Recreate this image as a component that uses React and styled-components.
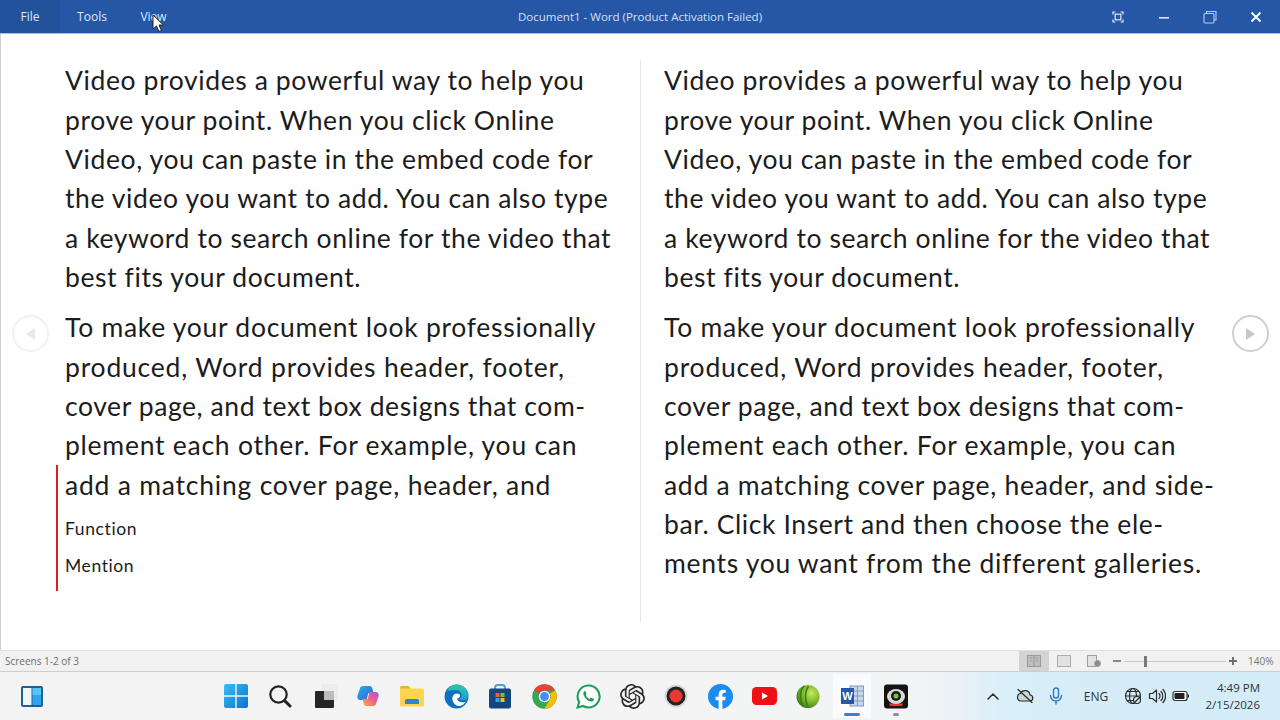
import React from "react";
import styled, { createGlobalStyle } from "styled-components";
import { SiOpenai } from "react-icons/si";

const Global = createGlobalStyle`
html, body { margin: 0; padding: 0; background: #fff; }
* { box-sizing: border-box; }
`;

const Screen = styled.div`
position: relative;
width: 1280px;
height: 720px;
overflow: hidden;
display: flex;
flex-direction: column;
font-family: "Open Sans", "Noto Sans", sans-serif;
`;

const TitleBar = styled.div`
height: 34px;
flex: none;
display: flex;
align-items: center;
background: #2557a6;
border-bottom: 1px solid #a9c0e6;
color: #dfe8f6;
font-size: 12px;
`;
const MenuItem = styled.div`
width: ${(p) => p.$w}px;
height: 33px;
display: flex;
align-items: center;
justify-content: center;
background: ${(p) => (p.$active ? "#23529d" : "transparent")};
`;
const DocTitle = styled.div`
position: absolute;
left: 0;
right: 0;
top: 9px;
text-align: center;
font-size: 11.5px;
color: #d5e0f2;
`;
const WindowButtons = styled.div`
margin-left: auto;
display: flex;
align-items: center;
padding-right: 1px;
`;
const WindowButton = styled.div`
width: 46px;
height: 33px;
display: flex;
align-items: center;
justify-content: center;
`;

const Reader = styled.div`
flex: 1;
position: relative;
display: flex;
padding-top: 26px;
border-left: 1px solid #cfcfcf;
`;
const Page = styled.div`
width: ${(p) => p.$w}px;
height: 562px;
padding: 1.4px 0 0 ${(p) => p.$pad}px;
border-right: ${(p) => (p.$divider ? "1px solid #e6e6e6" : "none")};
font-family: Lato, "Liberation Sans", sans-serif;
font-size: 26.5px;
line-height: 39.3px;
letter-spacing: 0.6px;
color: #1c1c1c;
`;
const Para = styled.div`
margin-bottom: 11.2px;
`;
const Line = styled.div`
white-space: nowrap;
letter-spacing: ${(p) => p.$ls || 0.6}px;
`;
const Suggest = styled.div`
margin: -1px 0 0 -9px;
padding: 1px 0 0 7px;
width: 300px;
height: 126px;
border-left: 2px solid #d6202a;
`;
const SuggestItem = styled.div`
font-size: 17.5px;
line-height: 37px;
${Line} + & { margin-top: 5px; }
`;
const NavButton = styled.div`
position: absolute;
top: 281px;
left: ${(p) => p.$x}px;
width: 37px;
height: 37px;
border-radius: 50%;
border: 2px solid ${(p) => (p.$off ? "#f1f1f1" : "#cfcfcf")};
background: #fff;
display: flex;
align-items: center;
justify-content: center;
`;

const StatusBar = styled.div`
height: 22px;
flex: none;
display: flex;
align-items: center;
background: #f1f1f1;
border-top: 1px solid #e2e2e2;
border-bottom: 1px solid #cdcdcd;
padding-left: 5px;
font-size: 10px;
color: #6d6d6d;
`;
const ViewButtons = styled.div`
margin-left: auto;
display: flex;
align-items: center;
height: 100%;
`;
const ViewButton = styled.div`
width: 30px;
height: 20px;
display: flex;
align-items: center;
justify-content: center;
background: ${(p) => (p.$on ? "#d3d3d3" : "transparent")};
`;
const Zoomer = styled.div`
display: flex;
align-items: center;
margin-left: 4px;
width: 124px;
color: #6a6a6a;
`;
const ZoomMark = styled.div`
width: 8px;
height: ${(p) => (p.$plus ? 8 : 2)}px;
position: relative;
flex: none;
background: ${(p) => (p.$plus ? "transparent" : "#8a8a8a")};
${(p) => p.$plus && `
  &::before { content: ""; position: absolute; left: 0; right: 0; top: 3px; height: 2px; background: #707070; }
  &::after { content: ""; position: absolute; top: 0; bottom: 0; left: 3px; width: 2px; background: #707070; }
`}
`;
const Track = styled.div`
flex: 1;
height: 1px;
margin: 0 3px;
background: #c9c9c9;
position: relative;
`;
const Thumb = styled.div`
position: absolute;
left: 20px;
top: -5px;
width: 3px;
height: 11px;
background: #7a7a7a;
`;
const Percent = styled.div`
width: 43px;
padding-left: 11px;
color: #777;
font-size: 10px;
`;

const Taskbar = styled.div`
height: 48px;
flex: none;
display: flex;
align-items: center;
padding-left: 10px;
background: linear-gradient(90deg, #f3f3f3 0%, #f3f4f5 72%, #d8eef8 79%, #d2ecf8 100%);
`;
const TaskSlot = styled.div`
position: relative;
width: 44px;
height: 44px;
padding: 0 3px;
display: flex;
align-items: center;
justify-content: center;
flex: none;
background: ${(p) => (p.$open ? "#fafbfc" : "transparent")};
background-clip: content-box;
`;
const Running = styled.div`
position: absolute;
bottom: 2px;
left: 50%;
transform: translateX(-50%);
width: ${(p) => (p.$active ? 16 : 6)}px;
height: 3px;
border-radius: 2px;
background: ${(p) => (p.$active ? "#3a7fd0" : "#8f8f8f")};
`;
const TaskIcons = styled.div`
display: flex;
margin-left: 160px;
`;
const Tray = styled.div`
margin-left: auto;
display: flex;
align-items: center;
height: 100%;
padding-right: 20px;
color: #333;
`;
const TrayItem = styled.div`
width: ${(p) => p.$w}px;
display: flex;
justify-content: center;
font-size: ${(p) => p.$size || 11}px;
`;
const Clock = styled.div`
width: 67px;
text-align: right;
font-size: 11.5px;
line-height: 17px;
color: #333;
`;
const Cursor = styled.svg`
position: absolute;
left: 152px;
top: 14px;
`;

const text1 = [
  "Video provides a powerful way to help you",
  "prove your point. When you click Online",
  "Video, you can paste in the embed code for",
  "the video you want to add. You can also type",
  "a keyword to search online for the video that",
  "best fits your document.",
];
// second paragraph runs a touch wider in the original than Lato does
const text2 = [
  { t: "To make your document look professionally", ls: 0.72 },
  { t: "produced, Word provides header, footer,", ls: 0.8 },
  { t: "cover page, and text box designs that com-", ls: 0.58 },
  { t: "plement each other. For example, you can", ls: 0.75 },
];
const lastLine = "add a matching cover page, header, and";

function Lines({ items }) {
  return items.map((l) => <Line key={l}>{l}</Line>);
}
function SpacedLines({ items }) {
  return items.map((l) => <Line key={l.t} $ls={l.ls}>{l.t}</Line>);
}

const IconWindows = () => (
  <svg width="24" height="24" viewBox="0 0 24 24">
    <defs>
      <linearGradient id="win" x1="0" y1="0" x2="1" y2="1">
        <stop offset="0" stopColor="#35c0f5" />
        <stop offset="1" stopColor="#0a73d0" />
      </linearGradient>
    </defs>
    <path fill="url(#win)" d="M0 2a2 2 0 0 1 2-2h9.3v11.3H0zM12.7 0H22a2 2 0 0 1 2 2v9.3H12.7zM0 12.7h11.3V24H2a2 2 0 0 1-2-2zM12.7 12.7H24V22a2 2 0 0 1-2 2h-9.3z" />
  </svg>
);
const IconSearch = () => (
  <svg width="24" height="24" viewBox="0 0 24 24" fill="none" stroke="#222" strokeWidth="2.2" strokeLinecap="round">
    <circle cx="10.5" cy="10.5" r="8.2" />
    <path d="M16.6 16.6 22 22" strokeWidth="3" />
  </svg>
);
const IconTaskView = () => (
  <svg width="30" height="30" viewBox="0 0 30 30">
    <rect x="12" y="3" width="17" height="17" rx="2" fill="#ececec" />
    <rect x="15" y="10" width="10" height="9" fill="#bdbdbd" />
    <path fill="#262626" d="M7 10h8v9h10v7a1 1 0 0 1-1 1H7a1 1 0 0 1-1-1V11a1 1 0 0 1 1-1z" />
  </svg>
);
const IconCopilot = () => (
  <svg width="24" height="24" viewBox="0 0 24 24">
    <defs>
      <linearGradient id="co1" x1="0" y1="0" x2="1" y2="1">
        <stop offset="0" stopColor="#1fb3e8" />
        <stop offset="1" stopColor="#3b5fd8" />
      </linearGradient>
      <linearGradient id="co2" x1="0" y1="1" x2="1" y2="0">
        <stop offset="0" stopColor="#f5b52e" />
        <stop offset="0.55" stopColor="#ef5f8f" />
        <stop offset="1" stopColor="#a155dd" />
      </linearGradient>
    </defs>
    <path fill="url(#co1)" d="M7 2h6.5c1.4 0 2.4.9 2.8 2.2L17.5 9h-5L10.300 16H4.500C2 16 .8 13.700 1.500 11.500L4 4.300C4.500 2.900 5.600 2 7 2z" />
    <path fill="url(#co2)" d="M17 22h-6.500c-1.400 0-2.400-.9-2.800-2.200L6.500 15h5l2.200-7h5.800c2.500 0 3.700 2.300 3 4.500L20 19.700C19.500 21.100 18.400 22 17 22z" />
  </svg>
);
const IconFolder = () => (
  <svg width="26" height="24" viewBox="0 0 26 24">
    <path fill="#e9b52c" d="M1 3.500A1.500 1.500 0 0 1 2.500 2h7l3 3H1z" />
    <rect x="1" y="4.500" width="24" height="18" rx="1.500" fill="#fbd54f" />
    <path fill="#2f87c9" d="M6 16.500A1.500 1.500 0 0 1 7.500 15h11a1.500 1.500 0 0 1 1.500 1.500V20H6z" />
  </svg>
);
const IconEdge = () => (
  <svg width="25" height="25" viewBox="0 0 24 24">
    <defs>
      <linearGradient id="ed1" x1="0" y1="0" x2="0" y2="1">
        <stop offset="0" stopColor="#33c6a0" />
        <stop offset="1" stopColor="#1a9fd8" />
      </linearGradient>
    </defs>
    <circle cx="12" cy="12" r="11.500" fill="#0f6fc0" />
    <path fill="url(#ed1)" d="M3 6.500C5 2.500 8.500.5 12 .5c6.500 0 11.500 5 11.500 10.500 0 3-2.500 4.500-5.500 4.500-2 0-3.500-.6-4-1 2-.8 3-2 3-3.500C17 8 14.500 6 11 6 7.500 6 4.500 6.500 3 6.500z" />
    <path fill="#fff" d="M8 14c0-3 2-5 4.500-5 2 0 3 1 3 2 0 1.500-1.500 2.500-3 3 .5 3 4 4.500 8.500 3-2 3-5 4.500-7.500 4C10.500 20.500 8 17.500 8 14z" />
  </svg>
);
const IconStore = () => (
  <svg width="24" height="25" viewBox="0 0 24 25">
    <path d="M7 5V3.500A2.500 2.500 0 0 1 9.500 1h5A2.500 2.500 0 0 1 17 3.500V5" fill="none" stroke="#4fa3da" strokeWidth="2" />
    <rect x="1" y="4.500" width="22" height="20" rx="2" fill="#16467e" />
    <rect x="7.500" y="9" width="4" height="4" fill="#f15a3c" />
    <rect x="12.500" y="9" width="4" height="4" fill="#7fbb32" />
    <rect x="7.500" y="14" width="4" height="4" fill="#2fa4e6" />
    <rect x="12.500" y="14" width="4" height="4" fill="#fbbc1c" />
  </svg>
);
const IconChrome = () => (
  <svg width="25" height="25" viewBox="0 0 48 48">
    <circle cx="24" cy="24" r="23.500" fill="#34a853" />
    <path fill="#ea4335" d="M24 .5a23.500 23.500 0 0 1 20.400 11.750H24a11.750 11.750 0 0 0-10.200 5.900L3.600 12.250A23.500 23.500 0 0 1 24 .5z" />
    <path fill="#fbbc04" d="M44.400 12.250A23.500 23.500 0 0 1 24 47.500l10.200-17.650A11.750 11.750 0 0 0 34.200 18z" />
    <circle cx="24" cy="24" r="11" fill="#fff" />
    <circle cx="24" cy="24" r="8.500" fill="#4a8af4" />
  </svg>
);
const IconWhatsApp = () => (
  <svg width="25" height="25" viewBox="0 0 24 24">
    <path fill="#fff" stroke="#1e9e57" strokeWidth="2" d="M12 1.500A10.500 10.500 0 0 0 3 17.300L1.500 22.500l5.400-1.400A10.500 10.500 0 1 0 12 1.500z" />
    <path fill="#1e9e57" d="M8.800 6.800c-.5 0-1.300.5-1.600 1.400-.4 1.100-.1 2.600 1.200 4.400 1.600 2.300 3.500 3.700 5.600 4.200 1.300.3 2.400-.2 2.900-1 .3-.5.400-1.200.3-1.500l-2.500-1.200c-.3-.1-.5 0-.7.200l-.8 1c-1.700-.6-3-1.800-3.900-3.400l.6-.8c.2-.2.2-.5.100-.7L9.200 7c-.1-.2-.2-.2-.4-.2z" />
  </svg>
);
const IconRecord = () => (
  <svg width="24" height="24" viewBox="0 0 24 24">
    <circle cx="12" cy="12" r="11.500" fill="#d8d8d8" />
    <circle cx="12" cy="12" r="9.500" fill="#222" />
    <circle cx="12" cy="12" r="6.500" fill="#e8382f" />
  </svg>
);
const IconFacebook = () => (
  <svg width="25" height="25" viewBox="0 0 24 24">
    <circle cx="12" cy="12" r="12" fill="#1d8af0" />
    <path fill="#fff" d="M16.500 15.500 17 12.300h-3.200v-2.100c0-.9.400-1.700 1.800-1.700H17V5.700s-1.300-.2-2.500-.2c-2.600 0-4.300 1.600-4.300 4.400v2.400H7.300v3.200h2.900V24h3.600v-8.500z" />
  </svg>
);
const IconYouTube = () => (
  <svg width="25" height="18" viewBox="0 0 25 18">
    <rect width="25" height="18" rx="4.500" fill="#ee0f17" />
    <path fill="#fff" d="M10 5.500v7l6-3.500z" />
  </svg>
);
const IconGreen = () => (
  <svg width="24" height="25" viewBox="0 0 24 24">
    <defs>
      <radialGradient id="gr" cx="0.65" cy="0.35" r="0.7">
        <stop offset="0" stopColor="#c6ea62" />
        <stop offset="0.55" stopColor="#7dbb2c" />
        <stop offset="1" stopColor="#3f7d18" />
      </radialGradient>
    </defs>
    <circle cx="12" cy="12" r="11.500" fill="url(#gr)" />
    <path fill="none" stroke="#3c7a17" strokeWidth="1.500" d="M8 1.500C3.500 6 3.500 18 8 22.500M12.500 2C8.500 7 8.500 17 12.500 22" />
  </svg>
);
const IconWord = () => (
  <svg width="23" height="22" viewBox="0 0 23 22">
    <rect x="9" y="1" width="13.500" height="20" fill="#c9d7ec" stroke="#7e9bc8" />
    <path stroke="#7e9bc8" d="M13 6h9M13 11h9M13 16h9M16.500 1v20" />
    <rect x="0" y="3" width="13" height="16" fill="#2458a8" />
    <text x="6.500" y="15" textAnchor="middle" fontSize="11" fontWeight="700" fill="#fff" fontFamily="Liberation Sans">W</text>
  </svg>
);
const IconCamera = () => (
  <svg width="24" height="25" viewBox="0 0 24 24">
    <rect width="24" height="24" rx="3" fill="#141414" />
    <path fill="#e8352c" d="M5 19h14l-1 2.500H6z" />
    <ellipse cx="12" cy="12" rx="9" ry="7.500" fill="#d9d9d9" />
    <circle cx="12" cy="11.500" r="5" fill="#1d1d1d" />
    <circle cx="12" cy="11.500" r="2.500" fill="#7cc142" />
  </svg>
);
const IconWidgets = () => (
  <svg width="24" height="23" viewBox="0 0 24 23">
    <rect x="1" y="1" width="22" height="21" rx="2" fill="#1d5f99" />
    <rect x="3" y="3" width="8.500" height="17" fill="#eef5fb" />
    <rect x="12.500" y="3" width="8.500" height="17" fill="#2ea6ee" />
    <rect x="12.500" y="3" width="8.500" height="7" fill="#58c4f5" />
  </svg>
);
const Tray1 = {
  fill: "none",
  stroke: "#2c2c2c",
  strokeWidth: 1.2,
  strokeLinecap: "round",
  strokeLinejoin: "round",
};

export default function App() {
  return (
    <Screen>
      <Global />
      <TitleBar>
        <MenuItem $w={60} $active>File</MenuItem>
        <MenuItem $w={64}>Tools</MenuItem>
        <MenuItem $w={59}>View</MenuItem>
        <DocTitle>Document1 - Word (Product Activation Failed)</DocTitle>
        <WindowButtons>
          <WindowButton>
            <svg width="12" height="12" viewBox="0 0 12 12" fill="none" stroke="#e4ecf8" strokeWidth="1.200">
              <path d="M1 3.500V1h2.500M8.500 1H11v2.500M11 8.500V11H8.500M3.500 11H1V8.500" />
              <rect x="3.200" y="3.200" width="5.600" height="5.600" />
            </svg>
          </WindowButton>
          <WindowButton>
            <svg width="12" height="12" viewBox="0 0 12 12"><rect x="1" y="6" width="10" height="1.600" fill="#dbe5f5" /></svg>
          </WindowButton>
          <WindowButton>
            <svg width="14" height="14" viewBox="0 0 14 14" fill="none" stroke="#b9cbe8" strokeWidth="1.100">
              <rect x="1" y="3.500" width="10" height="9.500" rx="1" />
              <path d="M3.500 3.500V1.500h9.500v8.500h-2" />
            </svg>
          </WindowButton>
          <WindowButton>
            <svg width="12" height="12" viewBox="0 0 12 12" stroke="#f4f7fc" strokeWidth="2"><path d="M1.500 1.500l9 9M10.500 1.500l-9 9" /></svg>
          </WindowButton>
        </WindowButtons>
      </TitleBar>

      <Reader>
        <Page $w={640} $pad={64} $divider>
          <Para><Lines items={text1} /></Para>
          <SpacedLines items={text2} />
          <Suggest>
            <Line $ls={0.78}>{lastLine}</Line>
            <SuggestItem>Function</SuggestItem>
            <SuggestItem>Mention</SuggestItem>
          </Suggest>
        </Page>
        <Page $w={639} $pad={23}>
          <Para><Lines items={text1} /></Para>
          <SpacedLines items={text2} />
          <Line $ls={0.7}>{lastLine} side-</Line>
          <Line $ls={0.6}>bar. Click Insert and then choose the ele-</Line>
          <Line $ls={0.7}>ments you want from the different galleries.</Line>
        </Page>
        <NavButton $x={11} $off>
          <svg width="12" height="14" viewBox="0 0 12 14"><path d="M10 1v12L1 7z" fill="#e8e8e8" /></svg>
        </NavButton>
        <NavButton $x={1231}>
          <svg width="12" height="14" viewBox="0 0 12 14"><path d="M1 1v12l9-6z" fill="#c8c8c8" /></svg>
        </NavButton>
      </Reader>

      <StatusBar>
        Screens 1-2 of 3
        <ViewButtons>
          <ViewButton $on>
            <svg width="14" height="12" viewBox="0 0 14 12" fill="#bdbdbd" stroke="#9a9a9a"><rect x=".5" y=".5" width="13" height="11" /><path d="M7 .5v11M3 3h2M3 6h2M9 3h2M9 6h2" /></svg>
          </ViewButton>
          <ViewButton>
            <svg width="14" height="12" viewBox="0 0 14 12" fill="#e2e2e2" stroke="#acacac"><rect x=".5" y=".5" width="13" height="11" /></svg>
          </ViewButton>
          <ViewButton>
            <svg width="14" height="12" viewBox="0 0 14 12" fill="#e2e2e2" stroke="#a0a0a0"><rect x=".5" y=".5" width="9" height="11" /><circle cx="10.500" cy="8.500" r="3" fill="#8a8a8a" /></svg>
          </ViewButton>
          <Zoomer>
            <ZoomMark />
            <Track><Thumb /></Track>
            <ZoomMark $plus />
          </Zoomer>
          <Percent>140%</Percent>
        </ViewButtons>
      </StatusBar>

      <Taskbar>
        <TaskSlot><IconWidgets /></TaskSlot>
        <TaskIcons>
          <TaskSlot><IconWindows /></TaskSlot>
          <TaskSlot><IconSearch /></TaskSlot>
          <TaskSlot><IconTaskView /></TaskSlot>
          <TaskSlot><IconCopilot /></TaskSlot>
          <TaskSlot><IconFolder /></TaskSlot>
          <TaskSlot><IconEdge /></TaskSlot>
          <TaskSlot><IconStore /></TaskSlot>
          <TaskSlot><IconChrome /></TaskSlot>
          <TaskSlot><IconWhatsApp /></TaskSlot>
          <TaskSlot><SiOpenai size={25} color="#2a2a2a" /></TaskSlot>
          <TaskSlot><IconRecord /></TaskSlot>
          <TaskSlot><IconFacebook /></TaskSlot>
          <TaskSlot><IconYouTube /></TaskSlot>
          <TaskSlot><IconGreen /></TaskSlot>
          <TaskSlot $open><IconWord /><Running $active /></TaskSlot>
          <TaskSlot><IconCamera /><Running /></TaskSlot>
        </TaskIcons>
        <Tray>
          <TrayItem $w={32}>
            <svg width="12" height="8" viewBox="0 0 12 8" {...Tray1} strokeWidth="1.500"><path d="M1 7l5-5 5 5" /></svg>
          </TrayItem>
          <TrayItem $w={32}>
            <svg width="18" height="16" viewBox="0 0 18 16" {...Tray1}>
              <path d="M5 13h8.500a3 3 0 0 0 .5-6 5 5 0 0 0-9.500-1.500A3.800 3.800 0 0 0 5 13z" fill="#ccd6d8" />
              <path d="M2 1.500l14 13" />
            </svg>
          </TrayItem>
          <TrayItem $w={30}>
            <svg width="14" height="18" viewBox="0 0 14 18" {...Tray1} stroke="#2b78c9" strokeWidth="1.400">
              <rect x="4.500" y="1" width="5" height="10" rx="2.500" />
              <path d="M1.500 8.500a5.500 5.500 0 0 0 11 0M7 14v3" />
            </svg>
          </TrayItem>
          <TrayItem $w={50} $size={12}>ENG</TrayItem>
          <TrayItem $w={24}>
            <svg width="18" height="18" viewBox="0 0 18 18" {...Tray1}>
              <circle cx="9" cy="9" r="7.500" />
              <ellipse cx="9" cy="9" rx="3.500" ry="7.500" />
              <path d="M1.500 9h15M3 4.500h12M3 13.500h12" />
              <circle cx="13" cy="13" r="3.500" fill="#d3ecf8" />
              <path d="M11 15l4-4" />
            </svg>
          </TrayItem>
          <TrayItem $w={24}>
            <svg width="18" height="16" viewBox="0 0 18 16" {...Tray1}>
              <path d="M1.500 5.500v5h3l4 3.500V2l-4 3.500z" />
              <path d="M11 5.500a3.500 3.500 0 0 1 0 5M13 3.500a6.500 6.500 0 0 1 0 9M15 1.500a9.500 9.500 0 0 1 0 13" />
            </svg>
          </TrayItem>
          <TrayItem $w={24}>
            <svg width="18" height="12" viewBox="0 0 18 12">
              <rect x="1" y="1.500" width="14" height="9" rx="2" fill="#fff" stroke="#2c2c2c" strokeWidth="1.200" />
              <rect x="2.500" y="3" width="10" height="6" rx="1" fill="#1f1f1f" />
              <rect x="15.500" y="4.500" width="1.500" height="3" fill="#2c2c2c" />
            </svg>
          </TrayItem>
          <Clock>4:49 PM<br />2/15/2026</Clock>
        </Tray>
      </Taskbar>

      <Cursor width="13" height="19" viewBox="0 0 13 19">
        <path d="M1 1v14l3.500-3 2.500 5.500 2.500-1L7 11h4.500z" fill="#fff" stroke="#222" strokeWidth="1" />
      </Cursor>
    </Screen>
  );
}
